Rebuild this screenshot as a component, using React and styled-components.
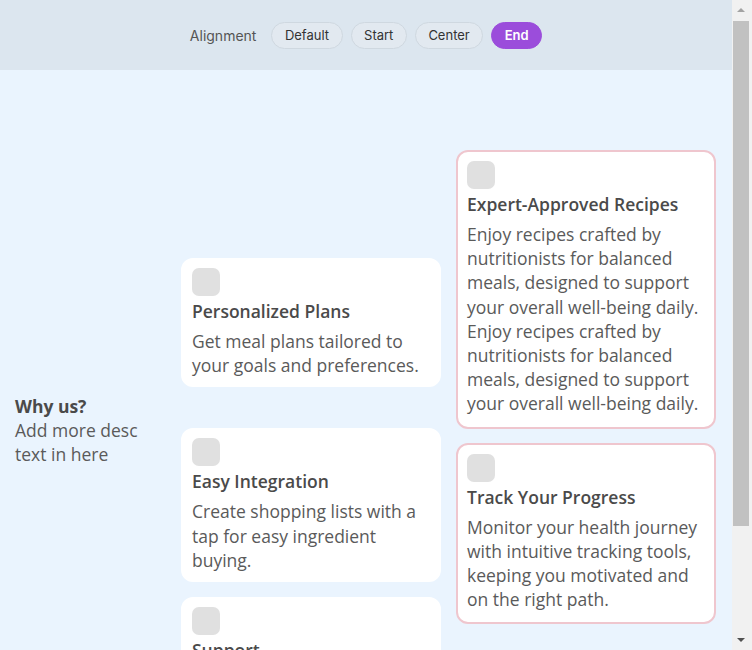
import React from 'react';
import styled, { createGlobalStyle } from 'styled-components';

const GlobalStyle = createGlobalStyle`
  html, body {
    margin: 0;
    padding: 0;
    background: #eaf4fe;
    font-family: "Open Sans", "Noto Sans", sans-serif;
    overflow: hidden;
  }
  * { box-sizing: border-box; }
`;

const options = ['Default', 'Start', 'Center', 'End'];

const columnOne = [
  {
    title: 'Personalized Plans',
    text: 'Get meal plans tailored to your goals and preferences.',
    gap: 0,
  },
  {
    title: 'Easy Integration',
    text: 'Create shopping lists with a tap for easy ingredient buying.',
    gap: 41,
  },
  {
    title: 'Support',
    text: 'Reach our friendly team any time you need a hand.',
    gap: 15,
  },
];

const columnTwo = [
  {
    title: 'Expert-Approved Recipes',
    text:
      'Enjoy recipes crafted by nutritionists for balanced meals, designed to support your overall well-being daily. Enjoy recipes crafted by nutritionists for balanced meals, designed to support your overall well-being daily.',
    gap: 0,
  },
  {
    title: 'Track Your Progress',
    text: 'Monitor your health journey with intuitive tracking tools, keeping you motivated and on the right path.',
    gap: 14,
  },
];

const App = () => {
  return (
    <>
      <GlobalStyle />
      <Shell>
        <Page>
          <Toolbar>
            <Label>Alignment</Label>
            {options.map((o) => (
              <Pill key={o} $active={o === 'End'}>
                {o}
              </Pill>
            ))}
          </Toolbar>

          <Main>
            <Intro>
              <IntroTitle>Why us?</IntroTitle>
              <IntroText>Add more desc text in here</IntroText>
            </Intro>

            <Column $top={188}>
              {columnOne.map((c) => (
                <Card key={c.title} $gap={c.gap}>
                  <Icon />
                  <CardTitle>{c.title}</CardTitle>
                  <CardText>{c.text}</CardText>
                </Card>
              ))}
            </Column>

            <Column $top={80}>
              {columnTwo.map((c) => (
                <Card key={c.title} $gap={c.gap} $outlined>
                  <Icon />
                  <CardTitle>{c.title}</CardTitle>
                  <CardText>{c.text}</CardText>
                </Card>
              ))}
            </Column>
          </Main>
        </Page>

        {/* page scrollbar */}
        <ScrollTrack>
          <ArrowButton>
            <Arrow $up />
          </ArrowButton>
          <Thumb />
          <Spacer />
          <ArrowButton>
            <Arrow />
          </ArrowButton>
        </ScrollTrack>
      </Shell>
    </>
  );
};

const Shell = styled.div`
  display: flex;
  height: 100vh;
  overflow: hidden;
`;

const Page = styled.div`
  flex: 1;
  min-width: 0;
  overflow: hidden;
`;

const ScrollTrack = styled.div`
  width: 20px;
  flex-shrink: 0;
  background: #f1f1f1;
  display: flex;
  flex-direction: column;
`;

const ArrowButton = styled.div`
  height: 20px;
  display: flex;
  align-items: center;
  justify-content: center;
  padding-right: 2px;
`;

const Arrow = styled.div`
  width: 0;
  height: 0;
  border-left: 4px solid transparent;
  border-right: 4px solid transparent;
  ${(p) =>
    p.$up
      ? 'border-bottom: 4px solid #a3a3a3;'
      : 'border-top: 4px solid #505050;'}
`;

const Thumb = styled.div`
  height: 505px;
  margin: 1px 3px 0 1px;
  background: #c1c1c1;
`;

const Spacer = styled.div`
  flex: 1;
`;

const Toolbar = styled.div`
  height: 70px;
  background: #dce6ef;
  display: flex;
  align-items: center;
  justify-content: center;
  gap: 8px;
  font-family: Inter, "Noto Sans", sans-serif;
`;

const Label = styled.span`
  font-size: 14px;
  color: #555;
  margin-right: 7px;
`;

const Pill = styled.button`
  height: 27px;
  padding: 0 12.5px;
  border-radius: 14px;
  border: 1px solid ${(p) => (p.$active ? '#9b4ddb' : '#cfd8e0')};
  background: ${(p) => (p.$active ? '#9b4ddb' : '#e2e9f0')};
  color: ${(p) => (p.$active ? '#fff' : '#333')};
  font-family: inherit;
  font-size: 13px;
  font-weight: ${(p) => (p.$active ? 600 : 400)};
  cursor: pointer;
`;

const Main = styled.div`
  display: flex;
  align-items: flex-start;
  min-height: 720px;
  padding: 0 16px 0 15px;
  background: #eaf4fe;
`;

const Intro = styled.div`
  width: 166px;
  flex-shrink: 0;
  align-self: center;
`;

const IntroTitle = styled.div`
  font-size: 17.5px;
  font-weight: 700;
  color: #4a4a4a;
  line-height: 24px;
`;

const IntroText = styled.div`
  font-size: 17.5px;
  color: #5a5a5a;
  line-height: 24px;
  width: 140px;
`;

const Column = styled.div`
  width: 260px;
  flex-shrink: 0;
  display: flex;
  flex-direction: column;
  padding-top: ${(p) => p.$top}px;
  padding-bottom: 64px;
  & + & {
    margin-left: 15px;
  }
`;

const Card = styled.div`
  background: #fff;
  border-radius: 12px;
  border: 2px solid ${(p) => (p.$outlined ? '#efc6ce' : '#fff')};
  padding: ${(p) => (p.$outlined ? '9px 8px 11px 9px' : '8px 8px 8px 9px')};
  margin-top: ${(p) => p.$gap}px;
`;

const Icon = styled.div`
  width: 28px;
  height: 28px;
  border-radius: 7px;
  background: #e0e0e0;
`;

const CardTitle = styled.div`
  margin-top: 3px;
  font-size: 17.5px;
  font-weight: 600;
  color: #4a4a4a;
  line-height: 24px;
`;

const CardText = styled.div`
  margin-top: 6px;
  font-size: 17.5px;
  color: #5a5a5a;
  line-height: 24.2px;
`;

export default App;
